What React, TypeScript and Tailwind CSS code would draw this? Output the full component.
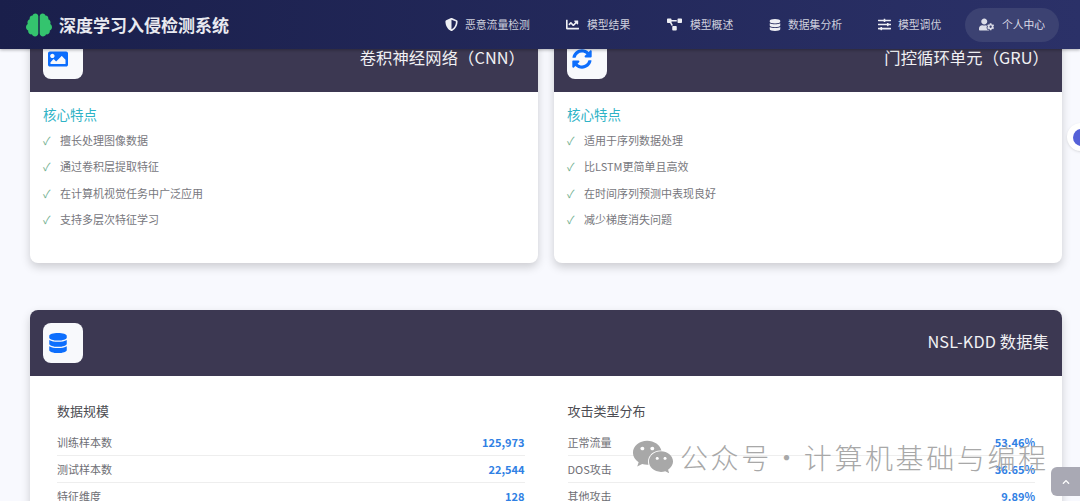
import { FaBrain, FaChartLine, FaChevronUp, FaDatabase, FaImage, FaProjectDiagram, FaShieldAlt, FaSlidersH, FaSyncAlt, FaUserCog, FaWeixin } from "react-icons/fa";
import type { ReactNode } from "react";

const font = "font-['Noto_Sans_CJK_SC','Noto_Sans',sans-serif]";

const navItems = [
	{ icon: <FaShieldAlt />, label: "恶意流量检测", width: "w-[121px]", gap: "gap-[7px]", size: "text-[13px]" },
	{ icon: <FaChartLine />, label: "模型结果", width: "w-[101px]", gap: "gap-[8px]", size: "text-[13px]" },
	{ icon: <FaProjectDiagram />, label: "模型概述", width: "w-[102px]", gap: "gap-[8px]", size: "text-[15px]" },
	{ icon: <FaDatabase />, label: "数据集分析", width: "w-[109px]", gap: "gap-[7px]", size: "text-[12px]" },
	{ icon: <FaSlidersH />, label: "模型调优", width: "w-[87px]", gap: "gap-[7px]", size: "text-[13px]" },
];

const CardHeader = ({ icon, title }: { icon: ReactNode; title: string }) => (
	<div className="flex h-[66px] items-center justify-between bg-[#3c3852] px-[13px]">
		<div className="flex h-10 w-10 items-center rounded-lg bg-[#f8f9fc] pl-[5px] text-[20px] text-[#0d6efd]">
			{icon}
		</div>
		<h2 className="-mt-[5px] text-[16.3px] leading-6 font-normal tracking-[0.1px] text-[#f1f1f4]">{title}</h2>
	</div>
);

const FeatureCard = ({ icon, title, items }: { icon: ReactNode; title: string; items: string[] }) => (
	<div className="h-[237px] flex-1 overflow-hidden rounded-b-lg bg-white shadow-[0_4px_10px_rgba(0,0,0,0.18)]">
		<CardHeader icon={icon} title={title} />
		<div className="px-[13px] pt-[12px]">
			<h3 className="text-[13.5px] leading-5 font-normal text-[#2fb3c6]">核心特点</h3>
			<ul className="mt-[7px] flex flex-col gap-[8.4px]">
				{items.map((item) => (
					<li key={item} className="flex items-center text-[11px] leading-[18px] text-[#77777d]">
						<span className="w-[17px] text-[#6fb08f]">✓</span>
						{item}
					</li>
				))}
			</ul>
		</div>
	</div>
);

const StatList = ({ title, rows }: { title: string; rows: string[][] }) => (
	<div className="flex-1">
		<h3 className="text-[13px] leading-5 font-normal text-[#4c4c52]">{title}</h3>
		<div className="mt-[8px]">
			{rows.map(([name, value]) => (
				<div key={name} className="flex h-[27px] items-center justify-between border-b border-[#eeeeee] text-[11px] text-[#6e6e74]">
					<span>{name}</span>
					<span className="font-semibold text-[#2f80e4]">{value}</span>
				</div>
			))}
		</div>
	</div>
);

const App = () => {
	return (
		<div className={`relative h-[501px] overflow-hidden bg-[#f8f9fe] ${font}`}>
			<nav className="relative z-10 flex h-[49px] items-center justify-between bg-gradient-to-r from-[#1a1f4b] to-[#2b3168] pr-[21px] pl-[26px] shadow-[0_1px_3px_rgba(0,0,0,0.3)]">
				<div className="flex items-center gap-[7px]">
					<FaBrain className="text-[26px] text-[#34c46e]" />
					<span className="text-[17px] font-bold text-[#e9eaf0]">深度学习入侵检测系统</span>
				</div>
				<div className="flex items-center">
					{navItems.map((item) => (
						<div key={item.label} className={`flex items-center text-[10.8px] text-[#cfd1de] ${item.gap} ${item.width}`}>
							<span className={`${item.size} text-[#eeeff4]`}>{item.icon}</span>
							{item.label}
						</div>
					))}
					<div className="flex h-[34px] w-[94px] items-center justify-center gap-[8px] rounded-full bg-[#3c4272] text-[10.8px] text-[#dcdde8]">
						<FaUserCog className="text-[15px]" />
						个人中心
					</div>
				</div>
			</nav>

			<main className="-mt-[23px] pr-[18px] pl-[30px]">
				<div className="flex gap-4">
					<FeatureCard
						icon={<FaImage />}
						title="卷积神经网络（CNN）"
						items={["擅长处理图像数据", "通过卷积层提取特征", "在计算机视觉任务中广泛应用", "支持多层次特征学习"]}
					/>
					<FeatureCard
						icon={<FaSyncAlt />}
						title="门控循环单元（GRU）"
						items={["适用于序列数据处理", "比LSTM更简单且高效", "在时间序列预测中表现良好", "减少梯度消失问题"]}
					/>
				</div>

				<div className="mt-[47px] overflow-hidden rounded-t-lg bg-white shadow-[0_4px_10px_rgba(0,0,0,0.18)]">
					<CardHeader icon={<FaDatabase />} title="NSL-KDD 数据集" />
					<div className="flex gap-[43px] px-[27px] pt-[25px]">
						<StatList
							title="数据规模"
							rows={[
								["训练样本数", "125,973"],
								["测试样本数", "22,544"],
								["特征维度", "128"],
							]}
						/>
						<StatList
							title="攻击类型分布"
							rows={[
								["正常流量", "53.46%"],
								["DOS攻击", "36.65%"],
								["其他攻击", "9.89%"],
							]}
						/>
					</div>
				</div>
			</main>

			{/* floating stuff */}
			<div className="absolute top-[123px] left-[1067px] flex h-[28px] w-[28px] items-center justify-center rounded-full bg-white shadow-sm">
				<div className="h-[17px] w-[17px] rounded-full bg-[#5561d8]" />
			</div>
			<div className="absolute top-[467px] right-0 flex h-[29px] w-[29px] items-center justify-center rounded-l-md bg-[#a9a9b4] text-[8px] text-white">
				<FaChevronUp />
			</div>
			<div className="absolute top-[436px] left-[632px] flex items-center gap-[6px] text-[#a8a8a8]">
				<FaWeixin className="text-[42px]" />
				<span className="flex text-[28px] leading-10 font-light tracking-[2.6px] whitespace-nowrap">
					公众号<span className="w-[32px] text-center">·</span>计算机基础与编程
				</span>
			</div>
		</div>
	);
};

export default App;
